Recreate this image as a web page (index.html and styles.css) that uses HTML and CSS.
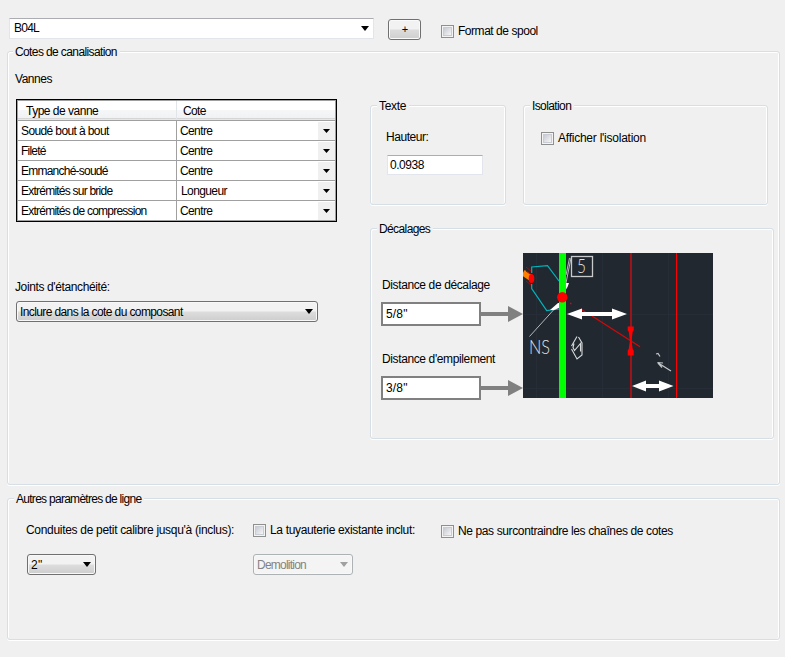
FILE: index.html
```html
<!DOCTYPE html>
<html lang="fr">
<head>
<meta charset="utf-8">
<title>Cotes de canalisation</title>
<link rel="stylesheet" href="styles.css">
</head>
<body>
<div class="topbar">
  <div class="combo editable"><span class="s-tight">B04L</span><i class="arrow"></i></div>
  <button class="add" type="button">+</button>
  <label class="check spool"><i class="box"></i><span class="s-spool">Format de spool</span></label>
</div>

<section class="group dims">
  <h2 class="legend s-med">Cotes de canalisation</h2>
  <div class="columns">
    <div class="left">
      <p class="label s-spool">Vannes</p>
      <div class="grid">
        <div class="row head"><span class="s-type">Type de vanne</span><span class="s-med">Cote</span></div>
        <div class="row"><span class="s-med">Soudé bout à bout</span><span class="s-med">Centre</span><b><i class="arrow small"></i></b></div>
        <div class="row"><span class="s-tight">Fileté</span><span class="s-med">Centre</span><b><i class="arrow small"></i></b></div>
        <div class="row"><span class="s-tight">Emmanché-soudé</span><span class="s-med">Centre</span><b><i class="arrow small"></i></b></div>
        <div class="row"><span class="s-tight">Extrémités sur bride</span><span class="s-med nudge">Longueur</span><b><i class="arrow small"></i></b></div>
        <div class="row"><span class="s-tight">Extrémités de compression</span><span class="s-med">Centre</span><b><i class="arrow small"></i></b></div>
      </div>
      <p class="label joints-label">Joints d'étanchéité:</p>
      <div class="combo button joints"><span class="s-med">Inclure dans la cote du composant</span><i class="arrow"></i></div>
    </div>
    <div class="right">
      <div class="pair">
        <section class="group texte">
          <h2 class="legend s-texte">Texte</h2>
          <p class="label s-spool">Hauteur:</p>
          <div class="input">0.0938</div>
        </section>
        <section class="group isolation">
          <h2 class="legend s-med">Isolation</h2>
          <label class="check"><i class="box"></i><span class="s-afficher">Afficher l'isolation</span></label>
        </section>
      </div>
      <section class="group offsets">
        <h2 class="legend s-med">Décalages</h2>
        <div class="offsets-body">
          <div class="fields">
            <p class="label">Distance de décalage</p>
            <div class="line"><div class="field">5/8"</div><svg width="42" height="16" viewBox="0 0 42 16"><path d="M0 6h27V0l15 8-15 8v-6H0z" fill="#808080"/></svg></div>
            <p class="label second">Distance d'empilement</p>
            <div class="line"><div class="field">3/8"</div><svg width="42" height="16" viewBox="0 0 42 16"><path d="M0 6h27V0l15 8-15 8v-6H0z" fill="#808080"/></svg></div>
          </div>
          <svg class="drawing" width="190" height="145" viewBox="0 0 190 145">
            <rect width="190" height="145" fill="#212830"/>
            <path d="M13.500 0v145M79.500 0v145M145.500 0v145M0 61.500h190M0 135.500h190" stroke="#262d36" fill="none"/>
            <path d="M0 19.500L8 25" stroke="#ff8000" stroke-width="6"/>
            <path d="M3 14l6 5M3 28l6 5M3 18l4 3" stroke="#c00000" fill="none"/>
            <ellipse cx="8.500" cy="25.500" rx="2.800" ry="4.500" fill="#f00"/>
            <path d="M36 28L24.500 12.700 8.700 14V20M8.700 31v4.500l15 22L36 56" stroke="#00b4bc" stroke-width="1.200" fill="none"/>
            <path d="M6.500 83.500L35 52M48 5l-5 25M46.500 5L43 22" stroke="#b5b8bb" stroke-width="1" fill="none"/>
            <path d="M27 57l8-7h3v4l-7 3zM43 30h3l-1.500 4-2.500 4z" fill="#fff"/>
            <rect x="36" width="7" height="145" fill="#0f0"/>
            <circle cx="39.300" cy="44.300" r="5.200" fill="#f00"/>
            <rect x="48.500" y="3.500" width="21" height="20" fill="none" stroke="#c8cacc" stroke-width="1.300"/>
            <text x="54" y="20" class="cad" textLength="9" lengthAdjust="spacingAndGlyphs">5</text>
            <text x="6" y="101" class="cad" textLength="21" lengthAdjust="spacingAndGlyphs">NS</text>
            <path d="M48.500 93l5.500-9.500M55.500 84l3.500 6v12l-5 4-5.500-10M51 90.500l-1 4 1.500 3 6-7v8" stroke="#d8dadc" stroke-width="1.100" fill="none"/>
            <path d="M108 0v145" stroke="#9b1419" stroke-width="2"/>
            <path d="M153.500 0v145" stroke="#f00"/>
            <path d="M69 63L117 93.700M57.500 56l5 3M47 50.500h1.500" stroke="#d40808" stroke-width="1.300"/>
            <path d="M104.700 73.500h6v4l-1 1-1.200 9.500 1.200 8 1 1.500v5h-6v-5l1-1.500 1.200-8-1.200-9.500-1-1z" fill="#f00"/>
            <path d="M44 61l15-5.500V59h30v-3.500L104 61l-15 5.500V63H59v3.500zM109 133l14-5.500v3.500h13v-3.500l14.500 5.500-14.500 5.500V135h-13v3.500z" fill="#fff"/>
            <path d="M133 101l2-.5 2 3M134.500 109.500l13.500 8.500M134.500 109.500l5.500.5M135 110l4 4.500" stroke="#c4c7ca" stroke-width="1.200" fill="none"/>
          </svg>
        </div>
      </section>
    </div>
  </div>
</section>

<section class="group other">
  <h2 class="legend s-autres">Autres paramètres de ligne</h2>
  <div class="other-body">
    <div class="small-bore">
      <p class="label s-conduites">Conduites de petit calibre jusqu'à (inclus):</p>
      <div class="combo button size"><span class="s-wide">2"</span><i class="arrow"></i></div>
    </div>
    <div class="existing">
      <label class="check"><i class="box"></i><span class="s-tuyau">La tuyauterie existante inclut:</span></label>
      <div class="combo button disabled"><span class="s-tight">Demolition</span><i class="arrow"></i></div>
    </div>
    <label class="check chains"><i class="box"></i><span>Ne pas surcontraindre les chaînes de cotes</span></label>
  </div>
</section>
</body>
</html>
```
FILE: styles.css
```css
* { box-sizing: border-box; }

body {
  margin: 0;
  width: 785px;
  height: 657px;
  overflow: hidden;
  background: #f0f0f0;
  color: #000;
  font: 12px/14px "Liberation Sans", Arial, sans-serif;
  letter-spacing: -0.38px;
  white-space: nowrap;
}

p, h2 { margin: 0; font: inherit; }

/* Letter spacing variants */
.s-tight { letter-spacing: -0.77px; }
.s-med { letter-spacing: -0.61px; }
.s-autres { letter-spacing: -0.72px; }
.s-type { letter-spacing: -0.5px; }
.s-spool { letter-spacing: -0.46px; }
.s-texte { letter-spacing: -0.34px; }
.s-afficher { letter-spacing: -0.24px; }
.s-conduites { letter-spacing: -0.31px; }
.s-tuyau { letter-spacing: -0.34px; }
.s-wide { letter-spacing: 0.4px; }

/* Top bar */
.topbar {
  display: flex;
  align-items: flex-start;
  height: 51px;
  padding: 18px 0 0 9px;
}

.combo {
  display: flex;
  align-items: center;
  justify-content: space-between;
  height: 21px;
}

.editable {
  width: 365px;
  padding: 0 4px 2px 4px;
  background: #fff;
  border: 1px solid #e2e6ec;
  border-top-color: #abadb3;
}

.editable .arrow { position: relative; top: 1px; }

.arrow {
  width: 8px;
  height: 5px;
  background: #000;
  clip-path: polygon(0 0, 100% 0, 50% 100%);
}

.arrow.small { width: 7px; height: 4px; }

.add {
  width: 33px;
  height: 21px;
  margin: 1px 20px 0 14px;
  padding: 0 0 1px 1px;
  border: 1px solid #707070;
  border-radius: 3px;
  box-shadow: inset 0 0 0 1px #fafafa;
  background: linear-gradient(#f2f2f2 0 48%, #dcdcdc 52%, #cfcfcf);
  color: #000;
  font: 11px/14px "Liberation Sans", Arial, sans-serif;
}

.check { display: flex; align-items: flex-start; height: 14px; }
.check .box {
  width: 13px;
  height: 13px;
  margin: 1px 4px 0 0;
  border: 1px solid #8e8f8f;
  background: linear-gradient(135deg, #c6cad3, #f6f6f6) content-box, #f4f4f4;
  padding: 2px;
  box-shadow: inset 0 0 0 1px #f4f4f4, inset 0 0 0 2px #c9ccd2;
}

.spool { margin-top: 6px; }

/* Group boxes */
.group {
  border: 1px solid #d5dfe5;
  border-radius: 3px;
  box-shadow: inset 1px 1px #fff, inset -1px 0 #fff, 0 1px #fff;
}

.legend {
  width: max-content;
  height: 14px;
  margin: -7px 0 0 5px;
  padding: 0 3px 0 2px;
  background: #f0f0f0;
}

.dims { width: 773px; height: 434px; margin-left: 7px; }
.columns { display: flex; }

.left { width: 362px; padding: 13px 0 0 7px; }

.grid {
  width: 321px;
  height: 123px;
  margin: 13px 0 0 1px;
  border: 1px solid #000;
  box-shadow: inset 0 0 0 1px #a0a0a0;
  background: #fff;
  padding: 1px 1px 0;
}

.row {
  display: grid;
  grid-template-columns: 159px 141px 17px;
  height: 20px;
  border-bottom: 1px solid #a0a0a0;
}
.row span { padding: 3px 0 0 3px; }
.row span:first-child { border-right: 1px solid #a0a0a0; }
.row span.nudge { padding-left: 4px; }
.row b { margin-top: 1px; background: #f0f0f0; display: grid; place-items: center; }

.row.head {
  background: linear-gradient(#fff 0 45%, #f5f6f7 50%, #f1f2f4 88%, #d5d5d5 92%, #f0f0f0 100%);
}
.row.head span { padding: 3px 0 0 6px; }
.row.head span:first-child { padding-left: 8px; border-color: #e1e4e8; }

.joints-label { margin-top: 58px; }

.button {
  border: 1px solid #707070;
  border-radius: 3px;
  box-shadow: inset 0 0 0 1px #f8f8f8;
  background: linear-gradient(#f2f2f2 0 48%, #dddddd 52%, #cdcdcd);
  padding: 0 4px 0 3px;
}
.joints { width: 302px; margin: 7px 0 0 1px; }

/* Text and isolation */
.right { padding-top: 46px; }
.right .legend { margin-left: 6px; }
.pair { display: flex; gap: 17px; }
.texte { width: 136px; height: 100px; }
.texte .label { margin: 17px 0 0 15px; }
.input {
  width: 96px;
  height: 20px;
  margin: 11px 0 0 16px;
  padding: 2px 0 0 2px;
  background: #fff;
  border: 1px solid #e2e6ec;
  border-top-color: #abadb3;
  letter-spacing: -0.45px;
}
.isolation { width: 245px; height: 100px; }
.isolation .check { margin: 18px 0 0 17px; }

/* Offsets */
.offsets { width: 404px; height: 211px; margin-top: 23px; }
.offsets-body { display: flex; }
.fields { width: 142px; padding: 42px 0 0 11px; }
.line { display: flex; align-items: center; width: 142px; height: 24px; margin: 10px 0 0 -1px; }
.field {
  width: 100px;
  height: 24px;
  padding: 3px 0 0 3px;
  border: 2px solid #808080;
  background: #fff;
  letter-spacing: 0.15px;
}
.line svg { flex: none; }
.second { margin-top: 26px; }
.drawing { flex: none; margin: 17px 0 0 10px; }
.cad {
  font: 300 20px Lato, "Liberation Sans", sans-serif;
  fill: #e0e2e4;
  letter-spacing: 0;
}

/* Other line settings */
.other { width: 773px; height: 142px; margin: 13px 0 0 7px; }
.other .legend { margin-left: 6px; }
.other-body { display: flex; padding: 17px 0 0 18px; }
.small-bore { width: 227px; }
.existing { width: 188px; }
.size { width: 69px; margin: 17px 0 0 1px; }
.disabled {
  width: 100px;
  margin-top: 17px;
  border-color: #adb2b5;
  background: #f4f4f4;
  color: #838383;
}
.disabled .arrow { background: #a0a0a0; }
.chains { margin-top: 1px; }
```
